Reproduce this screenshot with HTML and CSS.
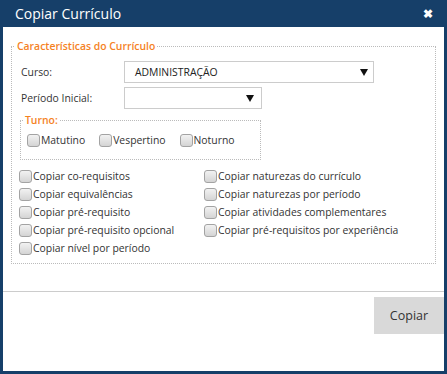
FILE: index.html
```html
<!DOCTYPE html>
<html lang="pt-BR">
   <head>
      <meta charset="UTF-8" />
      <title>Copiar Currículo</title>
      <link rel="stylesheet" href="styles.css">
   </head>
   <body>
      <div class="dialogo">
         <div class="cabecalho">
            <span class="titulo">Copiar Currículo</span>
            <span class="fechar">&#x2716;</span>
         </div>
         <div class="corpo">
            <fieldset class="grupo">
               <legend>Características do Currículo</legend>
               <div class="linha">
                  <label class="rotulo">Curso:</label>
                  <div class="seletor seletor-curso">
                     <span class="valor">ADMINISTRAÇÃO</span>
                     <svg class="seta" width="8" height="7" viewBox="0 0 8 7"><polygon points="0,0 8,0 4,7" fill="#111"/></svg>
                  </div>
               </div>
               <div class="linha">
                  <label class="rotulo">Período Inicial:</label>
                  <div class="seletor seletor-periodo">
                     <span class="valor"></span>
                     <svg class="seta" width="8" height="7" viewBox="0 0 8 7"><polygon points="0,0 8,0 4,7" fill="#111"/></svg>
                  </div>
               </div>
               <fieldset class="turno">
                  <legend>Turno:</legend>
                  <label class="opcao"><input type="checkbox">Matutino</label>
                  <label class="opcao"><input type="checkbox">Vespertino</label>
                  <label class="opcao"><input type="checkbox">Noturno</label>
               </fieldset>
               <div class="opcoes">
                  <div class="coluna">
                     <label class="opcao"><input type="checkbox">Copiar co-requisitos</label>
                     <label class="opcao"><input type="checkbox">Copiar equivalências</label>
                     <label class="opcao"><input type="checkbox">Copiar pré-requisito</label>
                     <label class="opcao"><input type="checkbox">Copiar pré-requisito opcional</label>
                     <label class="opcao"><input type="checkbox">Copiar nível por período</label>
                  </div>
                  <div class="coluna">
                     <label class="opcao"><input type="checkbox">Copiar naturezas do currículo</label>
                     <label class="opcao"><input type="checkbox">Copiar naturezas por período</label>
                     <label class="opcao"><input type="checkbox">Copiar atividades complementares</label>
                     <label class="opcao"><input type="checkbox">Copiar pré-requisitos por experiência</label>
                  </div>
               </div>
            </fieldset>
         </div>
         <div class="rodape">
            <button class="botao">Copiar</button>
         </div>
      </div>
   </body>
</html>
```

FILE: styles.css
```css
html, body {
margin: 0;
padding: 0;
}
body {
font-family: 'Open Sans', 'Noto Sans', sans-serif;
font-size: 10.4px;
color: #333;
background: #fff;
}
.dialogo {
width: 447px;
height: 374px;
box-sizing: border-box;
border: 3px solid #163f69;
border-top: none;
display: flex;
flex-direction: column;
}
.cabecalho {
height: 27px;
margin: 0 -3px;
background: #163f69;
color: #fff;
display: flex;
align-items: center;
justify-content: space-between;
padding: 0 14px 0 15px;
}
.titulo {
font-size: 14px;
}
.fechar {
font-size: 12px;
font-weight: 700;
}
.corpo {
height: 265px;
box-sizing: border-box;
padding: 12px 8px 0 8px;
border-bottom: 1px solid #ccc;
}
.grupo {
margin: 0;
padding: 8px 8px 6px 8px;
border: 1px dotted #bbb;
}
.grupo > legend {
color: #f5821f;
font-weight: 600;
padding: 0 2px;
margin-left: -5px;
}
.linha {
display: flex;
align-items: center;
margin-bottom: 4px;
padding-left: 1px;
}
.rotulo {
width: 103px;
}
.seletor {
height: 22px;
box-sizing: border-box;
border: 1px solid #ccc;
display: flex;
align-items: center;
justify-content: space-between;
padding: 0 5px 0 10px;
color: #222;
}
.seletor-curso {
width: 250px;
}
.seletor-periodo {
width: 138px;
padding-right: 7px;
}
.seta {
display: block;
}
.turno {
width: 241px;
box-sizing: border-box;
margin: 2px 0 0 0;
padding: 4px 6px 10px 6px;
border: 1px dotted #bbb;
display: flex;
gap: 14px;
}
.turno > legend {
color: #f5821f;
font-weight: 600;
padding: 0 2px;
margin-left: -4px;
}
.opcao {
display: flex;
align-items: center;
line-height: 18px;
white-space: nowrap;
}
.opcao input {
appearance: none;
flex-shrink: 0;
margin: 0 1px 0 0;
width: 13px;
height: 13px;
border: 1px solid #a3a3a3;
border-radius: 3px;
background: linear-gradient(#f2f2f2, #d4d4d4);
}
.opcoes {
display: flex;
margin-top: 7px;
margin-left: -1px;
}
.coluna {
width: 185px;
display: flex;
flex-direction: column;
}
.rodape {
flex: 1;
display: flex;
justify-content: flex-end;
align-items: flex-start;
padding-top: 5px;
}
.botao {
width: 70px;
height: 37px;
border: none;
background: #d9d9d9;
color: #333;
font-family: 'Open Sans', 'Noto Sans', sans-serif;
font-size: 12.5px;
}
```
